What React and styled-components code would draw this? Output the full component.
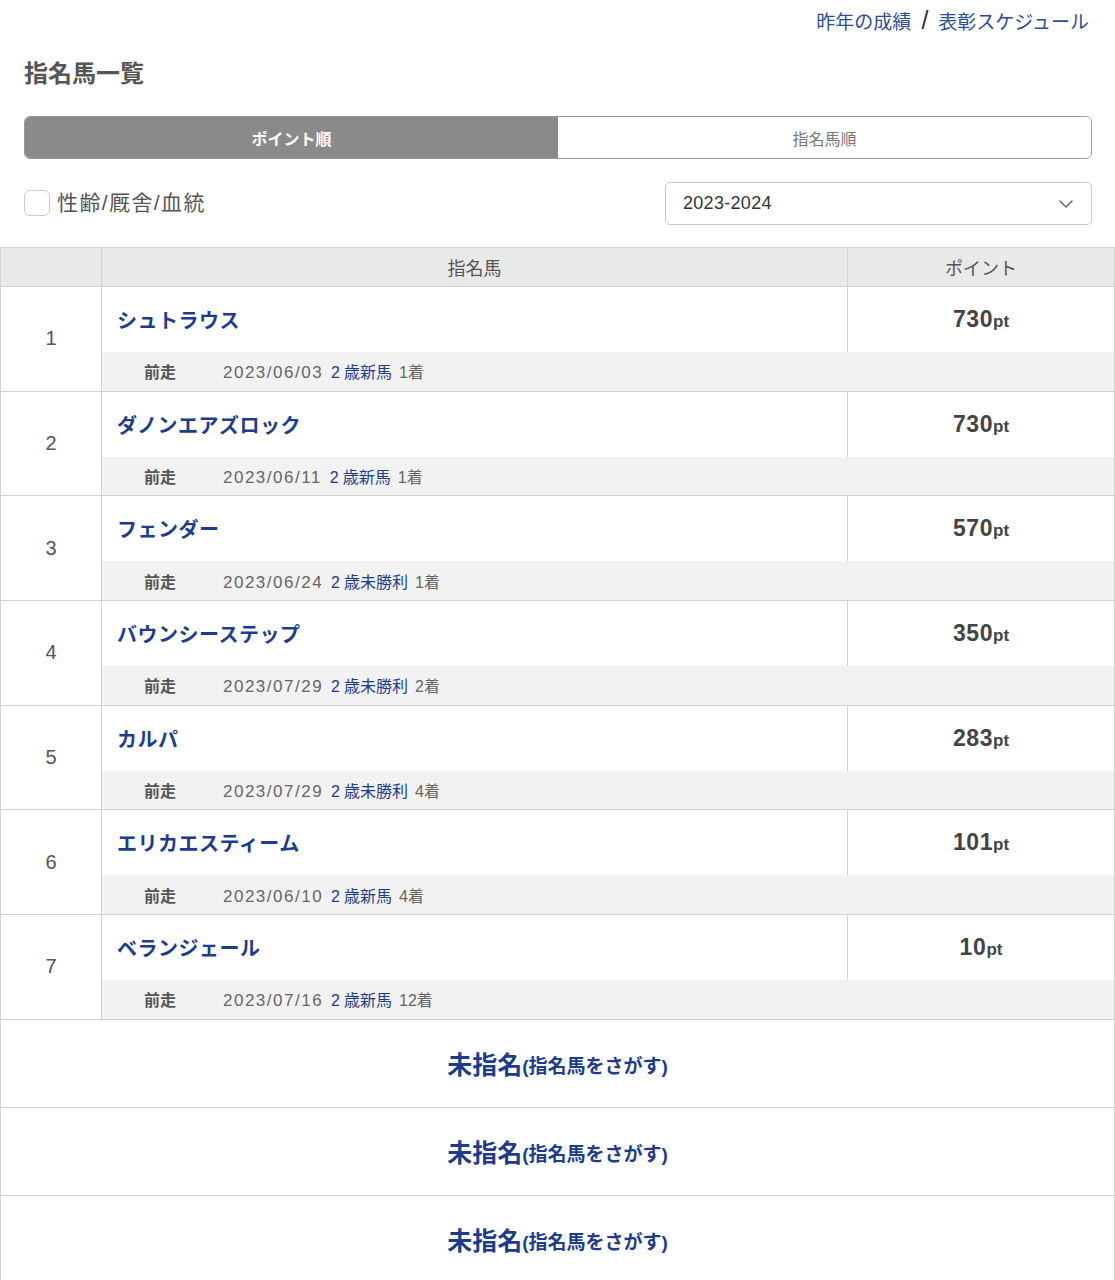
import React from "react";
import styled, { createGlobalStyle } from "styled-components";
import { ChevronDown } from "lucide-react";

const GlobalStyle = createGlobalStyle`
  body {
    margin: 0;
    background: #fff;
    font-family: "Liberation Sans", "Noto Sans CJK JP", sans-serif;
    color: #555;
  }
`;

const BLUE = "#1d3c8f";
const LINE = "#d2d2d2";

const horses = [
  { rank: 1, name: "シュトラウス", pt: 730, date: "2023/06/03", race: "2歳新馬", place: "1着" },
  { rank: 2, name: "ダノンエアズロック", pt: 730, date: "2023/06/11", race: "2歳新馬", place: "1着" },
  { rank: 3, name: "フェンダー", pt: 570, date: "2023/06/24", race: "2歳未勝利", place: "1着" },
  { rank: 4, name: "バウンシーステップ", pt: 350, date: "2023/07/29", race: "2歳未勝利", place: "2着" },
  { rank: 5, name: "カルパ", pt: 283, date: "2023/07/29", race: "2歳未勝利", place: "4着" },
  { rank: 6, name: "エリカエスティーム", pt: 101, date: "2023/06/10", race: "2歳新馬", place: "4着" },
  { rank: 7, name: "ベランジェール", pt: 10, date: "2023/07/16", race: "2歳新馬", place: "12着" },
];

const Page = styled.div`
  width: 1115px;
`;

const Top = styled.div`
  padding: 0 23px 0 24px;
`;

const LinkBar = styled.div`
  height: 40px;
  display: flex;
  justify-content: flex-end;
  align-items: center;
  gap: 10px;
  padding-right: 3px;
  font-size: 19px;
`;

const TopLink = styled.a`
  color: #2b4c9c;
  text-decoration: none;
  cursor: pointer;
`;

const Slash = styled.span`
  color: #333;
  font-size: 25px;
  font-weight: 300;
  line-height: 1;
`;

const Title = styled.h1`
  margin: 14px 0 0;
  font-size: 24px;
  line-height: 40px;
  font-weight: 700;
  color: #555;
`;

const Tabs = styled.div`
  margin-top: 22px;
  height: 43px;
  display: flex;
  border: 1px solid #999;
  border-radius: 6px;
  overflow: hidden;
  box-sizing: border-box;
`;

const Tab = styled.div`
  flex: 1;
  display: flex;
  align-items: center;
  justify-content: center;
  font-size: 16px;
  background: ${(p) => (p.$active ? "#8a8a8a" : "#fff")};
  color: ${(p) => (p.$active ? "#fff" : "#777")};
  font-weight: ${(p) => (p.$active ? 700 : 400)};
`;

const FilterRow = styled.div`
  margin-top: 23px;
  height: 43px;
  display: flex;
  align-items: center;
  justify-content: space-between;
`;

const CheckLabel = styled.label`
  display: flex;
  align-items: center;
  gap: 7px;
  font-size: 21px;
  letter-spacing: 1.4px;
  color: #555;
  margin-top: -2px;
`;

const LabelText = styled.span`
  margin-bottom: 4px;
`;

const Box = styled.span`
  width: 26px;
  height: 26px;
  box-sizing: border-box;
  border: 1.5px solid #ccc;
  border-radius: 6px;
  background: #fff;
`;

const Select = styled.div`
  width: 427px;
  height: 43px;
  box-sizing: border-box;
  border: 1px solid #c8c8c8;
  border-radius: 5px;
  display: flex;
  align-items: center;
  justify-content: space-between;
  padding: 0 13px 0 17px;
  font-size: 18px;
  color: #333;
  letter-spacing: 0.3px;
`;

const Table = styled.table`
  margin-top: 22px;
  width: 100%;
  border-collapse: collapse;
  table-layout: fixed;
  border: 1px solid ${LINE};
`;

const Th = styled.th`
  height: 38px;
  padding: 0;
  background: #e9e9e9;
  border: 1px solid ${LINE};
  font-size: 18px;
  font-weight: 400;
  color: #555;
`;

const RankCell = styled.td`
  border: 1px solid ${LINE};
  text-align: center;
  vertical-align: middle;
  font-size: 20px;
  font-weight: 300;
  color: #555;
  padding: 0;
`;

const NameCell = styled.td`
  height: 65px;
  padding: 0 0 0 15px;
  border-top: 1px solid ${LINE};
  vertical-align: middle;
  font-size: 20px;
  font-weight: 700;
  color: ${BLUE};
  letter-spacing: 0.5px;
`;

const PointCell = styled.td`
  padding: 0;
  border-top: 1px solid ${LINE};
  border-left: 1px solid ${LINE};
  text-align: center;
  vertical-align: middle;
  font-size: 23px;
  font-weight: 700;
  letter-spacing: 0.6px;
  color: #444;
`;

const Unit = styled.span`
  font-size: 17px;
  letter-spacing: 0;
`;

const SubCell = styled.td`
  height: 38.7px;
  padding: 0 0 0 42px;
  background: #f2f2f2;
  font-size: 16px;
  color: #666;
  vertical-align: middle;
`;

const Prev = styled.span`
  display: inline-block;
  width: 79px;
  font-weight: 700;
  color: #555;
`;

const DateText = styled.span`
  font-size: 17px;
  letter-spacing: 1.5px;
  margin-right: 8px;
`;

const Race = styled.span`
  color: ${BLUE};
  margin-right: 7px;
`;

const RaceAge = styled.span`
  margin-right: 4px;
`;

const EmptyRow = styled.div`
  height: 88px;
  box-sizing: border-box;
  border: 1px solid ${LINE};
  border-top: none;
  display: flex;
  align-items: center;
  justify-content: center;
  color: ${BLUE};
  font-weight: 700;
  font-size: 25px;
`;

const EmptySub = styled.span`
  font-size: 19px;
  padding-top: 3px;
`;

export default function App() {
  return (
    <Page>
      <GlobalStyle />
      <Top>
        <LinkBar>
          <TopLink>昨年の成績</TopLink>
          <Slash>/</Slash>
          <TopLink>表彰スケジュール</TopLink>
        </LinkBar>
        <Title>指名馬一覧</Title>
        <Tabs>
          <Tab $active>ポイント順</Tab>
          <Tab>指名馬順</Tab>
        </Tabs>
        <FilterRow>
          <CheckLabel>
            <Box />
            <LabelText>性齢/厩舎/血統</LabelText>
          </CheckLabel>
          <Select>
            2023-2024
            <ChevronDown size={24} color="#666" strokeWidth={1.5} />
          </Select>
        </FilterRow>
      </Top>
      <Table>
        <colgroup>
          <col style={{ width: 101 }} />
          <col style={{ width: 746 }} />
          <col />
        </colgroup>
        <thead>
          <tr>
            <Th />
            <Th>指名馬</Th>
            <Th>ポイント</Th>
          </tr>
        </thead>
        <tbody>
          {horses.map((h) => (
            <React.Fragment key={h.rank}>
              <tr>
                <RankCell rowSpan={2}>{h.rank}</RankCell>
                <NameCell>{h.name}</NameCell>
                <PointCell>
                  {h.pt}
                  <Unit>pt</Unit>
                </PointCell>
              </tr>
              <tr>
                <SubCell colSpan={2}>
                  <Prev>前走</Prev>
                  <DateText>{h.date}</DateText>
                  <Race>
                    <RaceAge>{h.race.slice(0, 1)}</RaceAge>
                    {h.race.slice(1)}
                  </Race>
                  {h.place}
                </SubCell>
              </tr>
            </React.Fragment>
          ))}
        </tbody>
      </Table>
      {[0, 1, 2].map((i) => (
        <EmptyRow key={i}>
          未指名<EmptySub>(指名馬をさがす)</EmptySub>
        </EmptyRow>
      ))}
    </Page>
  );
}
